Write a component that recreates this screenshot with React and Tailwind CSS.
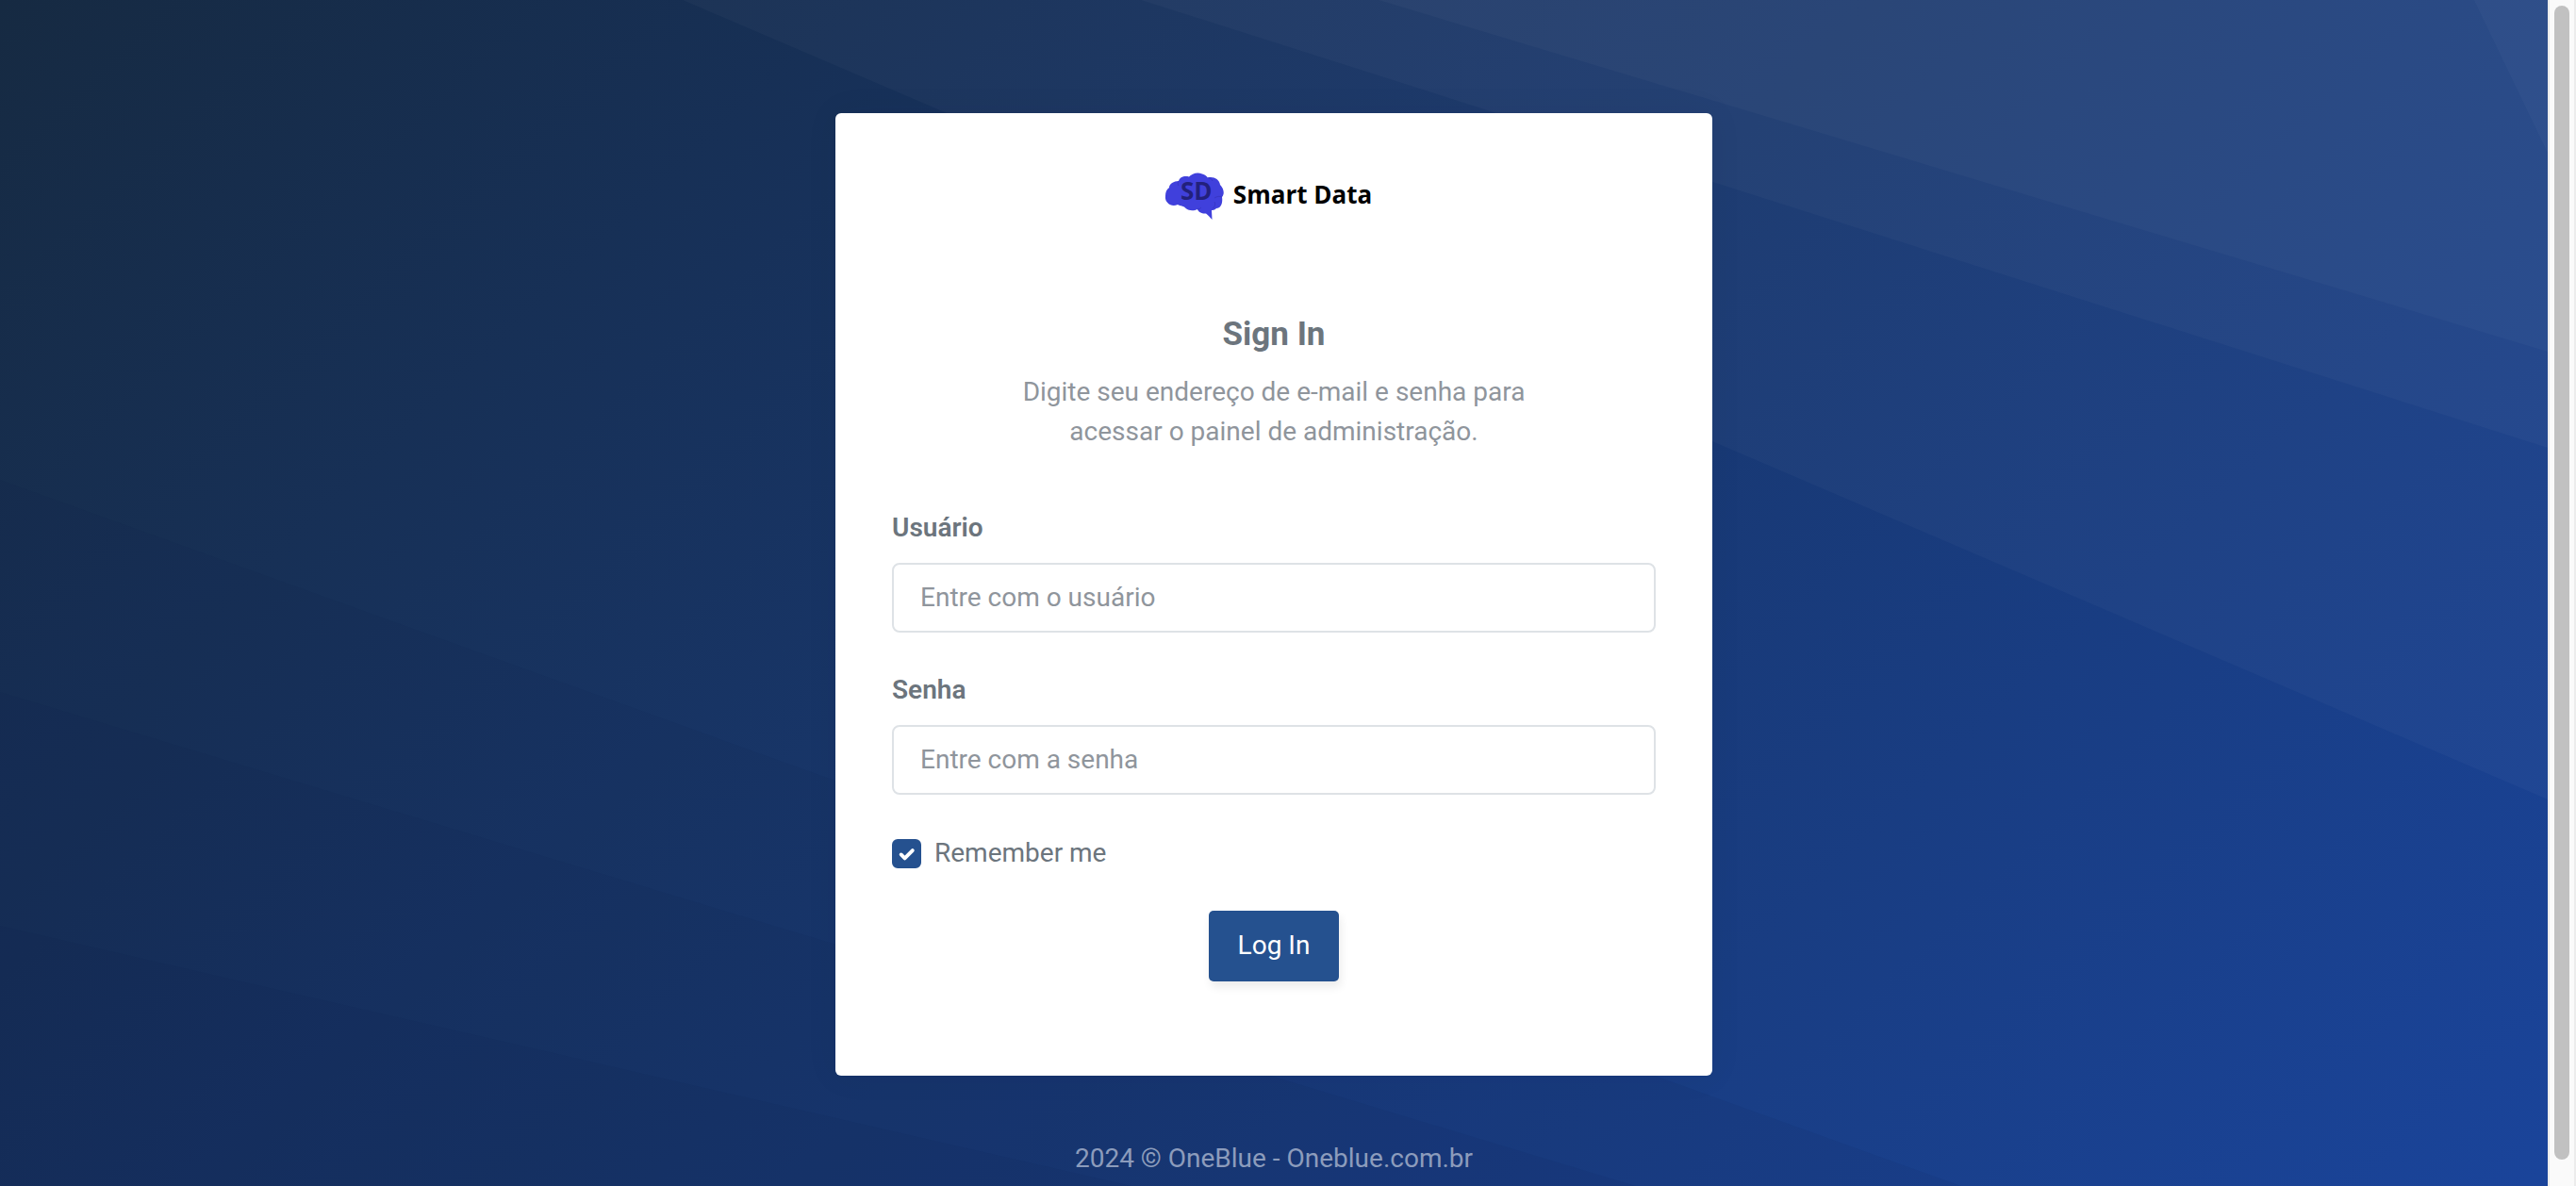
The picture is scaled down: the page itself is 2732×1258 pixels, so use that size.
import { useState } from "react";

const lightShapes = [
  "724,0 2702,848 2702,0",
  "1210,0 2702,475 2702,0",
  "1462,0 2702,373 2702,0",
  "2624,0 2702,162 2702,0",
];

const darkShapes = [
  "0,509 2080,1258 0,1258",
  "0,734 1735,1258 0,1258",
  "0,982 1200,1258 0,1258",
];

function Backdrop() {
  return (
    <svg
      className="absolute inset-0 size-full"
      viewBox="0 0 2702 1258"
      preserveAspectRatio="none"
      aria-hidden="true"
    >
      <defs>
        <linearGradient id="sky" gradientUnits="userSpaceOnUse" x1="0" y1="0" x2="1911" y2="1994">
          <stop offset="0" stopColor="#162a42" />
          <stop offset="1" stopColor="#1a449a" />
        </linearGradient>
      </defs>
      <rect width="2702" height="1258" fill="url(#sky)" />
      {lightShapes.map((points) => (
        <polygon key={points} points={points} fill="#ffffff" fillOpacity="0.026" />
      ))}
      {darkShapes.map((points) => (
        <polygon key={points} points={points} fill="#0b1f4a" fillOpacity="0.07" />
      ))}
    </svg>
  );
}

function Logo() {
  return (
    <a href="#" aria-label="Smart Data" className="flex h-[50px] items-start gap-[10px]">
      <svg className="h-[50px] w-[63px]" viewBox="0 0 63 50" aria-hidden="true">
        <path
          fill="#4040dc"
          d="M15 9 C16 5 21 3 26 4.500 C29 1 35 -1 40 1.500 C43 2.500 45 4 46 5.500 C52 4 58 7 59 13 C63 17 64 23 61 26 C62 32 60 38 55 38 C53 40 51 40 50 40 L50.500 50 C48 47 46 45 44 43.500 C40 44 36 42 35 39 C31 41 25 41 21 36.500 C17 35 15 35 14 34 C7 37 0 32 1 25 C1 21 2 18 5 16 C5 12 10 9 15 9 Z"
        />
        <path
          fill="none"
          stroke="#3331b4"
          strokeWidth="0.6"
          d="M46 5.500 C49 6 50 7 51 9 M61 26 C59 25 56 25 53 27 M35 39 C37 39 38 38 39 37 M15 9 C14 11 14 12 15 14 M53 31 C54 33 54 36 51 38"
        />
        <text
          x="17"
          y="29"
          className="font-['Open_Sans',sans-serif] text-[26px] font-bold"
          fill="#22207c"
        >
          SD
        </text>
      </svg>
      <span className="font-['Open_Sans',sans-serif] text-[26px] leading-[47px] font-bold text-black">
        Smart Data
      </span>
    </a>
  );
}

function Field({ id, label, type, placeholder }) {
  return (
    <div className="mb-10">
      <label htmlFor={id} className="mb-4 block leading-[42px] font-semibold">
        {label}
      </label>
      <input
        id={id}
        type={type}
        placeholder={placeholder}
        className="block h-[74px] w-full rounded-lg border-2 border-[#dee2e6] bg-white px-7 pb-[2px] text-[#6c757d] outline-none placeholder:text-[#8f959c] focus:border-[#b8c0c8]"
      />
    </div>
  );
}

export default function App() {
  const [remember, setRemember] = useState(true);

  return (
    <div className="flex min-h-screen bg-[#fafafa] font-[Roboto,sans-serif] text-[28px] leading-[42px] text-[#6c757d]">
      <div className="relative flex min-w-0 flex-1 flex-col items-center overflow-hidden px-6 pt-[120px]">
        <Backdrop />
        <main className="relative w-full max-w-[930px] rounded-md bg-white px-[60px] pt-[63px] pb-[100px] shadow-[0_0_36px_0_rgba(10,20,50,0.06)]">
          <div className="flex justify-center pr-3">
            <Logo />
          </div>
          <div className="mx-auto mt-[102px] max-w-[600px] text-center">
            <h1 className="text-[35px] leading-[40px] font-bold">Sign In</h1>
            <p className="mt-5 mb-[60px] text-[#8f959c]">
              Digite seu endereço de e-mail e senha para acessar o painel de administração.
            </p>
          </div>
          <form onSubmit={(event) => event.preventDefault()}>
            <Field id="username" label="Usuário" type="text" placeholder="Entre com o usuário" />
            <Field id="password" label="Senha" type="password" placeholder="Entre com a senha" />
            <div className="mt-[41px] flex items-center gap-[14px]">
              <span className="relative flex size-[31px]">
                <input
                  id="remember"
                  type="checkbox"
                  checked={remember}
                  onChange={(event) => setRemember(event.target.checked)}
                  className="peer size-full appearance-none rounded-md border-2 border-[#c3c9cf] checked:border-[#25518f] checked:bg-[#25518f]"
                />
                <svg
                  className="pointer-events-none absolute inset-0 hidden size-full peer-checked:block"
                  viewBox="0 0 32 32"
                  fill="none"
                  stroke="#ffffff"
                  strokeWidth="4"
                  strokeLinecap="round"
                  strokeLinejoin="round"
                  aria-hidden="true"
                >
                  <path d="M10 17 L14 21 L22.500 12.500" />
                </svg>
              </span>
              <label htmlFor="remember">Remember me</label>
            </div>
            <div className="mt-10 flex justify-center">
              <button
                type="submit"
                className="h-[75px] rounded-[5px] bg-[#25518f] px-[31px] pb-[2px] text-white shadow-[2px_6px_10px_0_rgba(0,0,0,0.08)]"
              >
                Log In
              </button>
            </div>
          </form>
        </main>
        <footer className="relative mt-[67px] pb-2 text-[#8c9cbc]">2024 © OneBlue - Oneblue.com.br</footer>
      </div>
      <div
        aria-hidden="true"
        className="flex w-[30px] shrink-0 flex-col items-center border-x-2 border-[#ececec] bg-[#fafafa] pt-[6px] pb-7"
      >
        <div className="w-4 flex-1 rounded-full bg-[#c1c1c1]" />
      </div>
    </div>
  );
}
